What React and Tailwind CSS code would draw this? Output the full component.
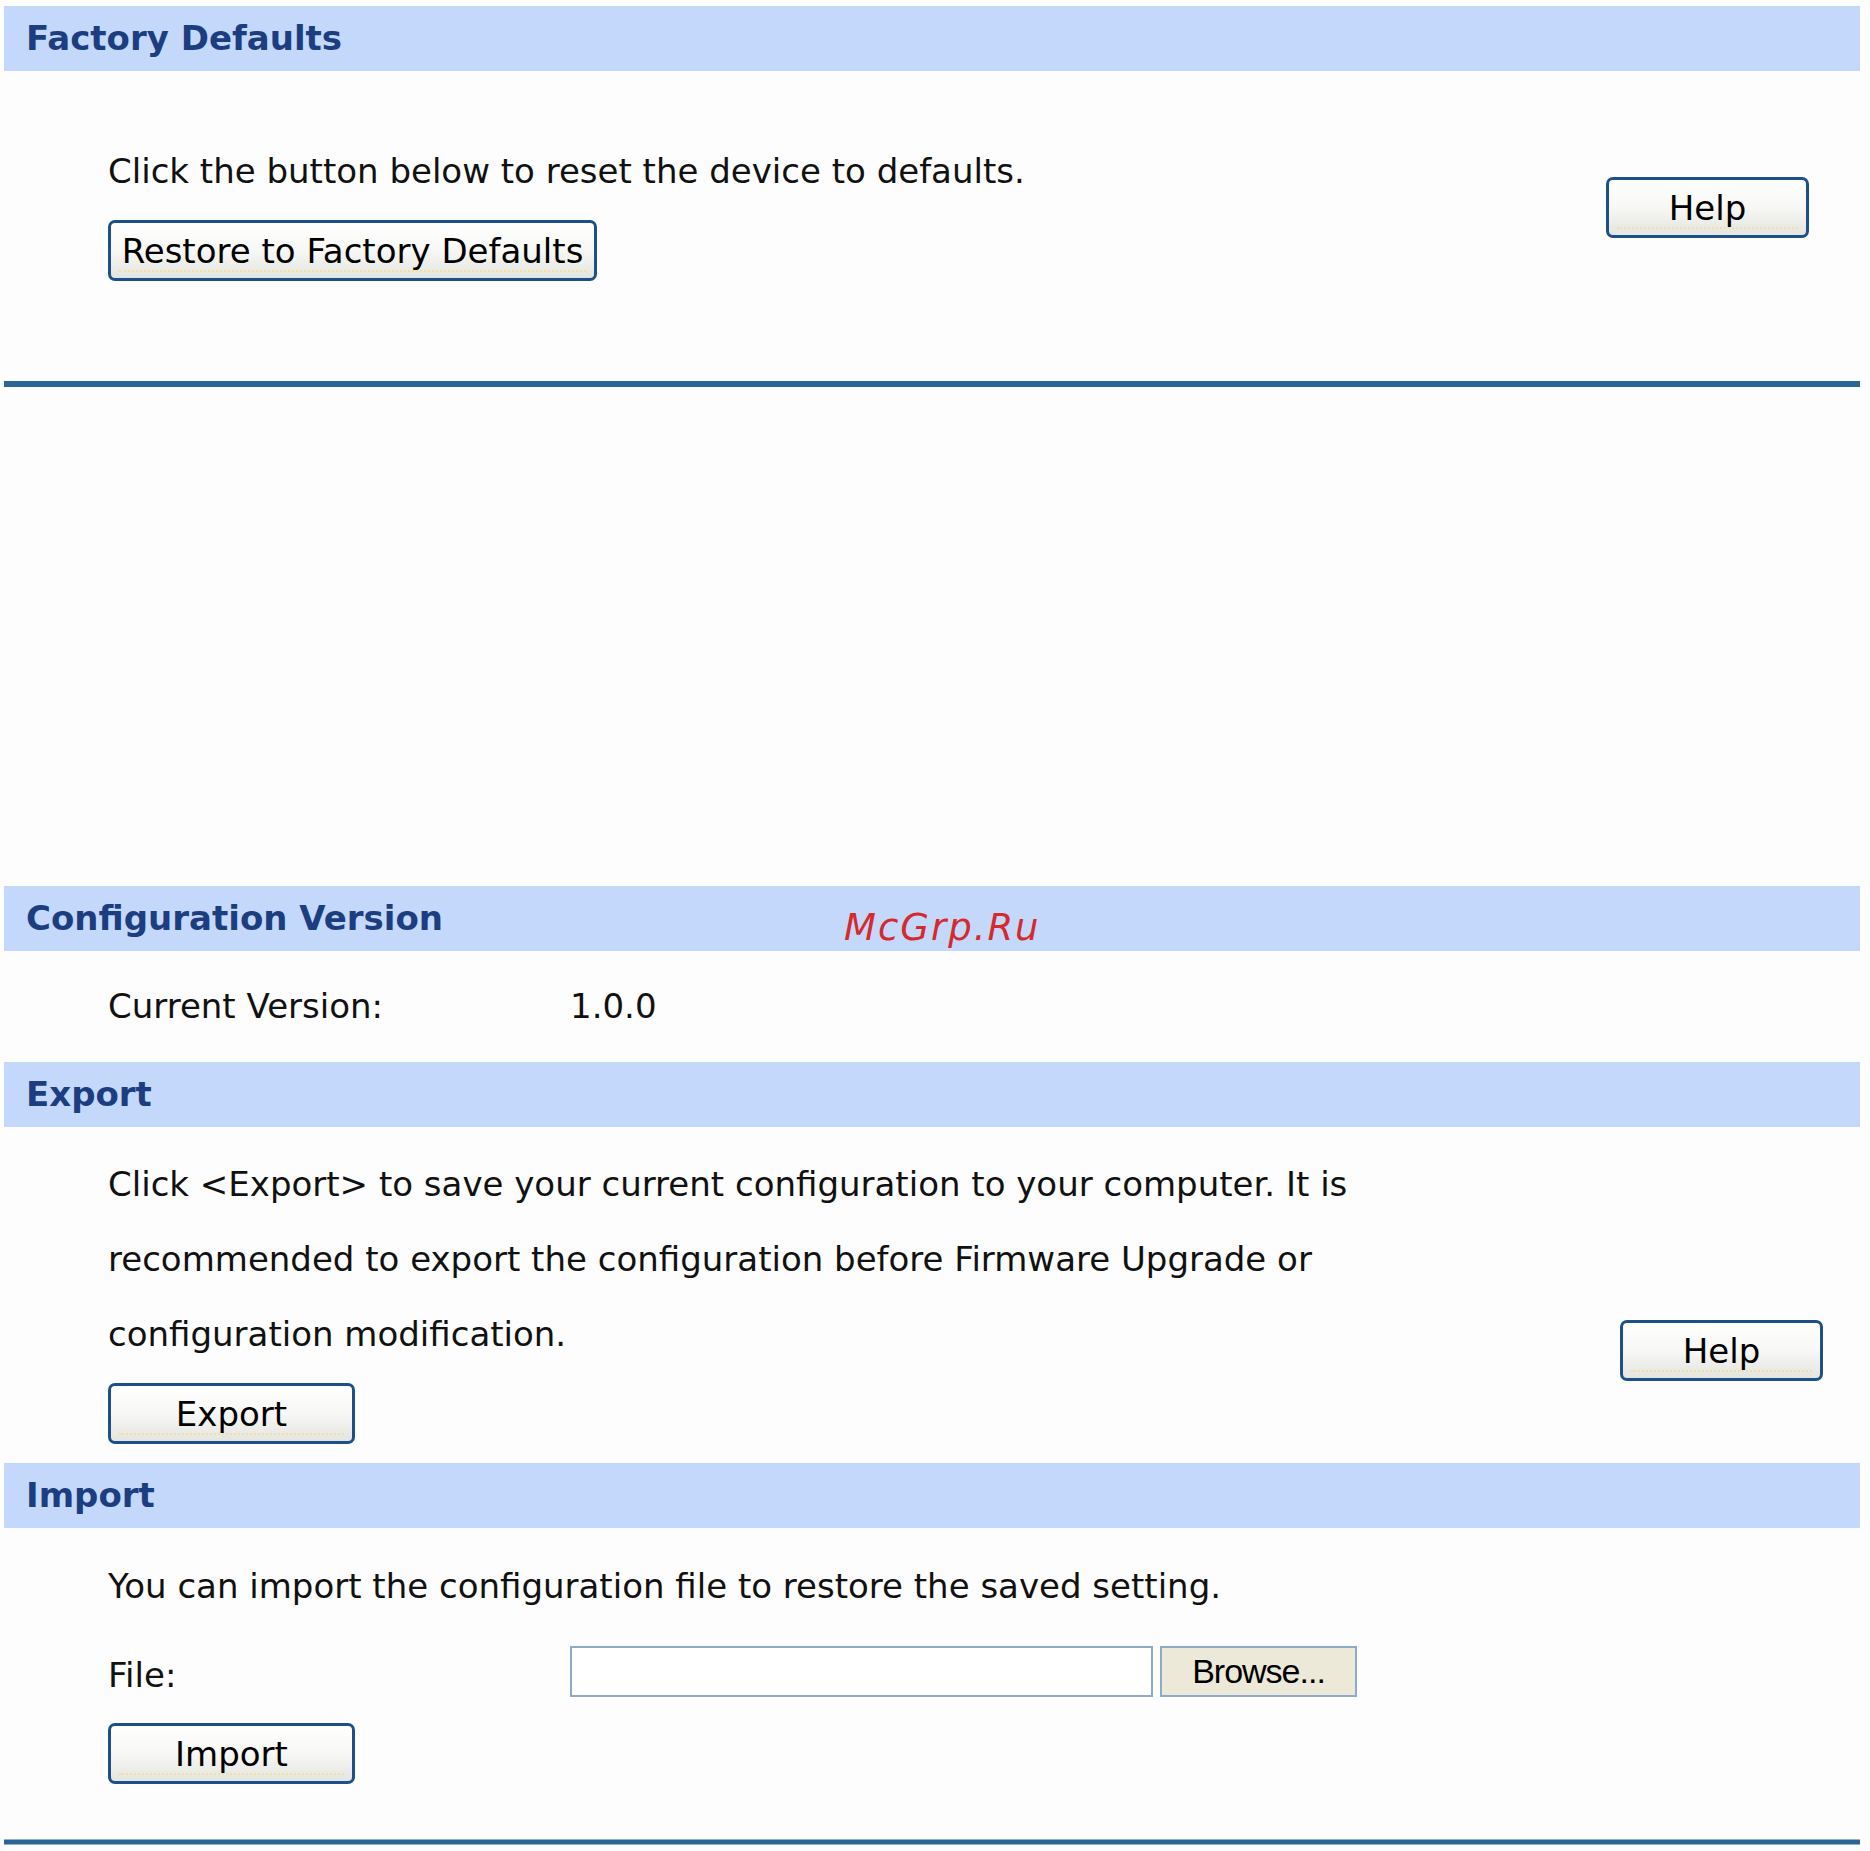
import React from "react";

const font = { fontFamily: '"DejaVu Sans", Verdana, sans-serif' };

function XpButton({ children, className = "" }) {
  return (
    <button
      type="button"
      className={
        "relative flex h-[61px] items-center justify-center rounded-[7px] border-[3px] border-[#1d4f88] bg-gradient-to-b from-white via-[#f7f7f5] to-[#e4e4e0] text-[34px] leading-[40px] text-black after:absolute after:bottom-[6px] after:left-[8px] after:right-[8px] after:border-b-2 after:border-dotted after:border-[#f3dfa2] after:content-[''] " +
        className
      }
      style={font}
    >
      {children}
    </button>
  );
}

function Header({ children }) {
  return (
    <div className="flex h-[65px] items-center bg-[#c4d8fc] pl-[22px] text-[34px] font-bold text-[#1c3e80]">
      {children}
    </div>
  );
}

export default function App() {
  return (
    <div
      className="relative min-h-[1851px] w-[1870px] bg-[#fdfdfd] pl-[4px] pr-[10px] pt-[6px] text-[#111]"
      style={font}
    >
      {/* Factory Defaults */}
      <Header>Factory Defaults</Header>
      <div className="flex h-[310px] justify-between">
        <div className="flex flex-col items-start pl-[104px] pt-[80px]">
          <div className="text-[34px] leading-[40px]">
            Click the button below to reset the device to defaults.
          </div>
          <XpButton className="mt-[29px] w-[489px]">Restore to Factory Defaults</XpButton>
        </div>
        <div className="pr-[51px] pt-[106px]">
          <XpButton className="w-[203px]">Help</XpButton>
        </div>
      </div>
      <div className="h-[6px] bg-[#2b6597]" />

      <div className="h-[499px]" />

      {/* Configuration Version */}
      <Header>Configuration Version</Header>
      <div className="flex pb-[36px] pl-[104px] pt-[35px] text-[34px] leading-[40px]">
        <div className="w-[462px]">Current Version:</div>
        <div>1.0.0</div>
      </div>

      {/* Export */}
      <Header>Export</Header>
      <div className="flex h-[336px] justify-between">
        <div className="flex flex-col items-start pl-[104px] pt-[20px]">
          <div className="text-[34px] leading-[75px]">
            Click &lt;Export&gt; to save your current configuration to your computer. It is
            <br />
            recommended to export the configuration before Firmware Upgrade or
            <br />
            configuration modification.
          </div>
          <XpButton className="mt-[11px] w-[247px]">Export</XpButton>
        </div>
        <div className="pr-[37px] pt-[193px]">
          <XpButton className="w-[203px]">Help</XpButton>
        </div>
      </div>

      {/* Import */}
      <Header>Import</Header>
      <div className="flex h-[311px] flex-col items-start pl-[104px] pt-[38px]">
        <div className="text-[34px] leading-[40px]">
          You can import the configuration file to restore the saved setting.
        </div>
        <div className="mt-[40px] flex h-[51px] items-center">
          <div className="w-[462px] pt-[6px] text-[34px] leading-[40px]">File:</div>
          <div className="h-[51px] w-[583px] border-2 border-[#8eaacb] bg-white" />
          <div
            className="ml-[7px] flex h-[51px] w-[197px] items-center justify-center border-2 border-[#8eaacb] bg-[#ece9d8] text-[34px] tracking-[-1px] text-black"
            style={{ fontFamily: '"Liberation Sans", Arial, sans-serif' }}
          >
            Browse...
          </div>
        </div>
        <XpButton className="mt-[26px] w-[247px]">Import</XpButton>
      </div>
      <div className="h-[6px] border-y border-[#8fb3d3] bg-[#2b6597]" />

      {/* watermark */}
      <div
        className="absolute left-[844px] top-[904px] text-[37px] italic leading-[48px] tracking-[2px] text-[#d42a2e]"
        style={font}
      >
        McGrp.Ru
      </div>
    </div>
  );
}
